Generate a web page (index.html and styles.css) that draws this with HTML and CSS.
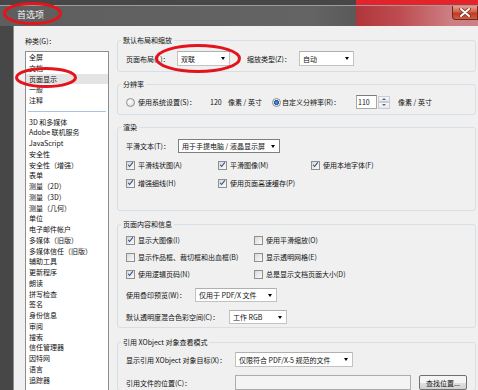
FILE: index.html
```html
<!DOCTYPE html>
<html lang="zh-CN">
<head>
  <meta charset="UTF-8">
  <meta name="viewport" content="width=device-width, initial-scale=1.0">
  <title>首选项</title>
  <link rel="stylesheet" href="styles.css">
</head>
<body>
  <div class="win">
    <div class="topstrip"></div>
    <div class="caption">
      <span class="title">首选项</span>
      <span class="close">
        <svg viewBox="0 0 12 9" width="12" height="9"><path class="x-out" d="M2 1l8 7M10 1L2 8"/><path class="x-in" d="M2 1l8 7M10 1L2 8"/></svg>
      </span>
    </div>

    <div class="body">
      <div class="edge"></div>

      <div class="sidebar">
        <div class="lbl">种类(G)：</div>
        <ul class="cats">
          <li>全屏</li>
          <li>文档</li>
          <li class="sel">页面显示</li>
          <li>一般</li>
          <li>注释</li>
          <li class="sep"></li>
          <li>3D 和多媒体</li>
          <li>Adobe 联机服务</li>
          <li>JavaScript</li>
          <li>安全性</li>
          <li>安全性（增强）</li>
          <li>表单</li>
          <li>测量（2D）</li>
          <li>测量（3D）</li>
          <li>测量（几何）</li>
          <li>单位</li>
          <li>电子邮件帐户</li>
          <li>多媒体（旧版）</li>
          <li>多媒体信任（旧版）</li>
          <li>辅助工具</li>
          <li>更新程序</li>
          <li>朗读</li>
          <li>拼写检查</li>
          <li>签名</li>
          <li>身份信息</li>
          <li>审阅</li>
          <li>搜索</li>
          <li>信任管理器</li>
          <li>因特网</li>
          <li>语言</li>
          <li>追踪器</li>
        </ul>
      </div>

      <div class="panel">
        <fieldset class="g-layout">
          <legend>默认布局和缩放</legend>
          <div class="row">
            <span class="lab-layout">页面布局(L)：</span>
            <div class="combo cb-layout">双联</div>
            <span class="lab-zoom">缩放类型(Z)：</span>
            <div class="combo cb-zoom">自动</div>
          </div>
        </fieldset>

        <fieldset class="g-res">
          <legend>分辨率</legend>
          <div class="row">
            <span class="radio"></span>
            <span class="lab-sys">使用系统设置(S)：</span>
            <span class="num">120</span>
            <span class="unit">像素 / 英寸</span>
            <span class="radio on"></span>
            <span class="lab-custom">自定义分辨率(R)：</span>
            <span class="spin-input">110</span>
            <span class="spin"><span class="up"></span><span class="down"></span></span>
            <span class="unit unit-r">像素 / 英寸</span>
          </div>
        </fieldset>

        <fieldset class="g-render">
          <legend>渲染</legend>
          <div class="row row-sel">
            <span class="lab-smooth">平滑文本(T)：</span>
            <div class="combo cb-smooth">用于手提电脑 / 液晶显示屏</div>
          </div>
          <div class="row row-chk">
            <label class="chk col-a"><span class="box"><svg viewBox="0 0 9 9"><path d="M1.5 4.2l1.8 2.3L7.5 1.2"/></svg></span>平滑线状图(A)</label>
            <label class="chk col-b"><span class="box"><svg viewBox="0 0 9 9"><path d="M1.5 4.2l1.8 2.3L7.5 1.2"/></svg></span>平滑图像(M)</label>
            <label class="chk"><span class="box"><svg viewBox="0 0 9 9"><path d="M1.5 4.2l1.8 2.3L7.5 1.2"/></svg></span>使用本地字体(F)</label>
          </div>
          <div class="row row-chk">
            <label class="chk col-a"><span class="box"><svg viewBox="0 0 9 9"><path d="M1.5 4.2l1.8 2.3L7.5 1.2"/></svg></span>增强细线(H)</label>
            <label class="chk col-b"><span class="box"><svg viewBox="0 0 9 9"><path d="M1.5 4.2l1.8 2.3L7.5 1.2"/></svg></span>使用页面高速缓存(P)</label>
          </div>
        </fieldset>

        <fieldset class="g-page">
          <legend>页面内容和信息</legend>
          <div class="row row-chk">
            <label class="chk col-wide"><span class="box"><svg viewBox="0 0 9 9"><path d="M1.5 4.2l1.8 2.3L7.5 1.2"/></svg></span>显示大图像(I)</label>
            <label class="chk"><span class="box"></span>使用平滑缩放(O)</label>
          </div>
          <div class="row row-chk">
            <label class="chk col-wide"><span class="box"></span>显示作品框、裁切框和出血框(B)</label>
            <label class="chk"><span class="box"></span>显示透明网格(E)</label>
          </div>
          <div class="row row-chk">
            <label class="chk col-wide"><span class="box"><svg viewBox="0 0 9 9"><path d="M1.5 4.2l1.8 2.3L7.5 1.2"/></svg></span>使用逻辑页码(N)</label>
            <label class="chk"><span class="box"></span>总是显示文档页面大小(D)</label>
          </div>
          <div class="row row-sel">
            <span class="lab-over">使用叠印预览(W)：</span>
            <div class="combo cb-over">仅用于 PDF/X 文件</div>
          </div>
          <div class="row row-sel">
            <span class="lab-blend">默认透明度混合色彩空间(C)：</span>
            <div class="combo cb-blend">工作 RGB</div>
          </div>
        </fieldset>

        <fieldset class="g-xobj">
          <legend>引用 XObject 对象查看模式</legend>
          <div class="row">
            <span class="lab-xobj">显示引用 XObject 对象目标(X)：</span>
            <div class="combo cb-xobj">仅限符合 PDF/X-5 规范的文件</div>
          </div>
          <div class="row row-path">
            <span class="lab-xobj">引用文件的位置(C)：</span>
            <span class="path"></span>
            <span class="btn">查找位置...</span>
          </div>
        </fieldset>
      </div>
    </div>

    <svg class="marks" viewBox="0 0 478 390" width="478" height="390">
      <ellipse cx="32.5" cy="13.5" rx="28" ry="10"/>
      <ellipse cx="46" cy="77.5" rx="29.5" ry="9"/>
      <ellipse cx="198" cy="58.5" rx="41.5" ry="13"/>
    </svg>
  </div>
</body>
</html>
```

FILE: styles.css
```css
/* 首选项 对话框 */
* {
  box-sizing: border-box;
}

body {
  margin: 0;
  width: 478px;
  height: 390px;
  overflow: hidden;
  font-family: "Noto Sans CJK SC", "Noto Sans", sans-serif;
  font-size: 7px;
  color: #111;
  background: #f0f0f0;
}

.win {
  position: relative;
  width: 478px;
  height: 390px;
  overflow: hidden;
}

/* 标题栏 */
.topstrip {
  height: 5px;
  background: linear-gradient(to right, #474747 0, #474747 356px, #e5232a 356px, #e5232a 100%);
}

.caption {
  display: flex;
  height: 21px;
  border-top: 1px solid #9c9c9c;
  background: linear-gradient(to right, #5e5e5e 0, #646464 310px, #5a5a5a 355px, #b1363b 357px, #bd4d51 400px, #cd8084 452px);
}

.title {
  padding: 3px 0 0 17px;
  font-size: 9px;
  line-height: 12px;
  color: #f4f4f4;
}

.close {
  margin-left: auto;
  width: 26px;
  height: 14px;
  display: flex;
  align-items: center;
  justify-content: center;
  border: 1px solid #6b2a22;
  border-top: none;
  border-radius: 0 0 0 4px;
  background: linear-gradient(#e5a08f, #d2614b 45%, #c23a22 55%, #d6593e);
}

.close svg {
  fill: none;
  stroke-linecap: round;
}

.x-out {
  stroke: #6e2a20;
  stroke-width: 3.4;
}

.x-in {
  stroke: #fff;
  stroke-width: 2;
}

/* 主体 */
.body {
  display: flex;
  height: 364px;
  overflow: hidden;
}

.edge {
  width: 14px;
  background: #474747;
  border-right: 1px solid #8d8d8d;
}

.sidebar {
  display: flex;
  flex-direction: column;
  width: 98px;
  padding: 10px 0 0 11px;
}

.lbl {
  line-height: 10px;
}

.cats {
  flex: 1;
  list-style: none;
  margin: 5px 0 0;
  padding: 0;
  width: 84px;
  overflow: hidden;
  background: #fff;
  border: 1px solid #8b8e94;
  border-bottom: none;
}

.cats li {
  height: 10.75px;
  line-height: 10.75px;
  padding-left: 3px;
  white-space: nowrap;
}

.cats .sel {
  background: #e4e4e4;
}

.cats .sep {
  height: 0;
  margin: 5px 2px 4.75px;
  border-top: 1px solid #a9c3e0;
}

/* 右侧设置 */
.panel {
  width: 359px;
  margin-left: 5px;
  padding-top: 9px;
}

fieldset {
  margin: 0;
  padding: 0 8px;
  min-width: 0;
  border: 1px solid #d5dfe5;
  border-radius: 3px;
}

legend {
  padding: 0 2px;
  margin-left: -5px;
  line-height: 10px;
}

.row {
  display: flex;
  align-items: center;
  white-space: nowrap;
}

.g-layout {
  padding-top: 6px;
  padding-bottom: 5px;
}

.g-layout .row {
  height: 15px;
}

.g-res {
  margin-top: 7px;
  padding-top: 6px;
  padding-bottom: 5px;
}

.g-res .row {
  height: 14px;
}

.g-render {
  margin-top: 7px;
  padding-top: 7px;
  padding-bottom: 21px;
}

.g-page {
  margin-top: 8px;
  padding-top: 5px;
  padding-bottom: 3px;
}

.g-xobj {
  margin-top: 9px;
  padding-top: 5px;
  padding-bottom: 0;
}

.row-sel {
  height: 14px;
}

.row-chk {
  height: 12px;
  margin-top: 6px;
}

.g-page .row-chk {
  margin-top: 5px;
}

.g-page .row-chk:first-of-type {
  margin-top: 0;
}

.g-page .row-sel {
  margin-top: 8px;
}

.g-xobj .row {
  height: 15px;
}

.g-xobj .row-path {
  margin-top: 8px;
}

/* 下拉框 */
.combo {
  display: flex;
  align-items: center;
  height: 100%;
  padding-left: 3px;
  background: #fff;
  border: 1px solid #c2c2c2;
  border-top-color: #b0b0b0;
  overflow: hidden;
}

.combo::after {
  content: "";
  margin-left: auto;
  margin-right: 4px;
  flex: none;
  border-left: 2.5px solid transparent;
  border-right: 2.5px solid transparent;
  border-top: 3px solid #000;
}

.lab-layout { width: 51px; }
.cb-layout { width: 53px; }
.lab-zoom { width: 52px; margin-left: 17px; }
.cb-zoom { width: 55px; }

.lab-smooth { width: 52px; }
.cb-smooth { width: 102px; border-color: #7f7f7f; }

.lab-over { width: 69px; }
.cb-over { width: 82px; }
.lab-blend { width: 103px; }
.cb-blend { width: 58px; }

.lab-xobj { width: 109px; }
.cb-xobj { width: 118px; }

/* 单选 / 复选 */
.radio {
  flex: none;
  width: 9px;
  height: 9px;
  border: 1px solid #8f8f8f;
  border-radius: 50%;
  background: radial-gradient(circle at 40% 40%, #ffffff, #d6d6d6);
}

.radio.on {
  background: radial-gradient(circle, #5aa2ea 0, #1d55a6 2.2px, #eeeeee 2.8px, #d4d4d4 100%);
}

.lab-sys { width: 72px; margin-left: 3px; }
.num { width: 18px; }
.unit { width: 44px; }
.lab-custom { width: 74px; margin-left: 1px; }
.unit-r { margin-left: 8px; }

.spin-input {
  width: 21px;
  height: 14px;
  padding-left: 1px;
  line-height: 12px;
  background: #fff;
  border: 1px solid #a8a8a8;
  border-top-color: #7c7c7c;
}

.spin {
  display: flex;
  flex-direction: column;
  width: 12px;
  height: 13px;
  margin-left: 1px;
}

.spin span {
  flex: 1;
  display: flex;
  align-items: center;
  justify-content: center;
  border: 1px solid #c9cdd2;
  background: linear-gradient(#f9f9f9, #e6e8eb);
}

.spin .up::after {
  content: "";
  border-left: 2px solid transparent;
  border-right: 2px solid transparent;
  border-bottom: 2px solid #4b6a93;
}

.spin .down::after {
  content: "";
  border-left: 2px solid transparent;
  border-right: 2px solid transparent;
  border-top: 2px solid #4b6a93;
}

.chk {
  display: flex;
  align-items: center;
}

.col-a { width: 92px; }
.col-b { width: 93px; }
.col-wide { width: 128px; }

.box {
  flex: none;
  display: flex;
  align-items: center;
  justify-content: center;
  width: 9px;
  height: 9px;
  margin-right: 3px;
  border: 1px solid #8f8f8f;
  background: linear-gradient(135deg, #d9d9d9, #fbfbfb);
}

.box svg {
  width: 8px;
  height: 8px;
  fill: none;
  stroke: #24498e;
  stroke-width: 1.3;
}

/* 位置 */
.path {
  width: 176px;
  height: 15px;
  background: #f4f4f4;
  border: 1px solid #adadad;
}

.btn {
  display: flex;
  align-items: center;
  justify-content: center;
  width: 48px;
  height: 15px;
  margin-left: 8px;
  border: 1px solid #707070;
  border-radius: 2px;
  background: linear-gradient(#f4f4f4 50%, #e0e0e0 50%, #d2d2d2);
}

/* 红圈标注 */
.marks {
  position: absolute;
  left: 0;
  top: 0;
  pointer-events: none;
}

.marks ellipse {
  fill: none;
  stroke: #e3141c;
  stroke-width: 3;
}
```
